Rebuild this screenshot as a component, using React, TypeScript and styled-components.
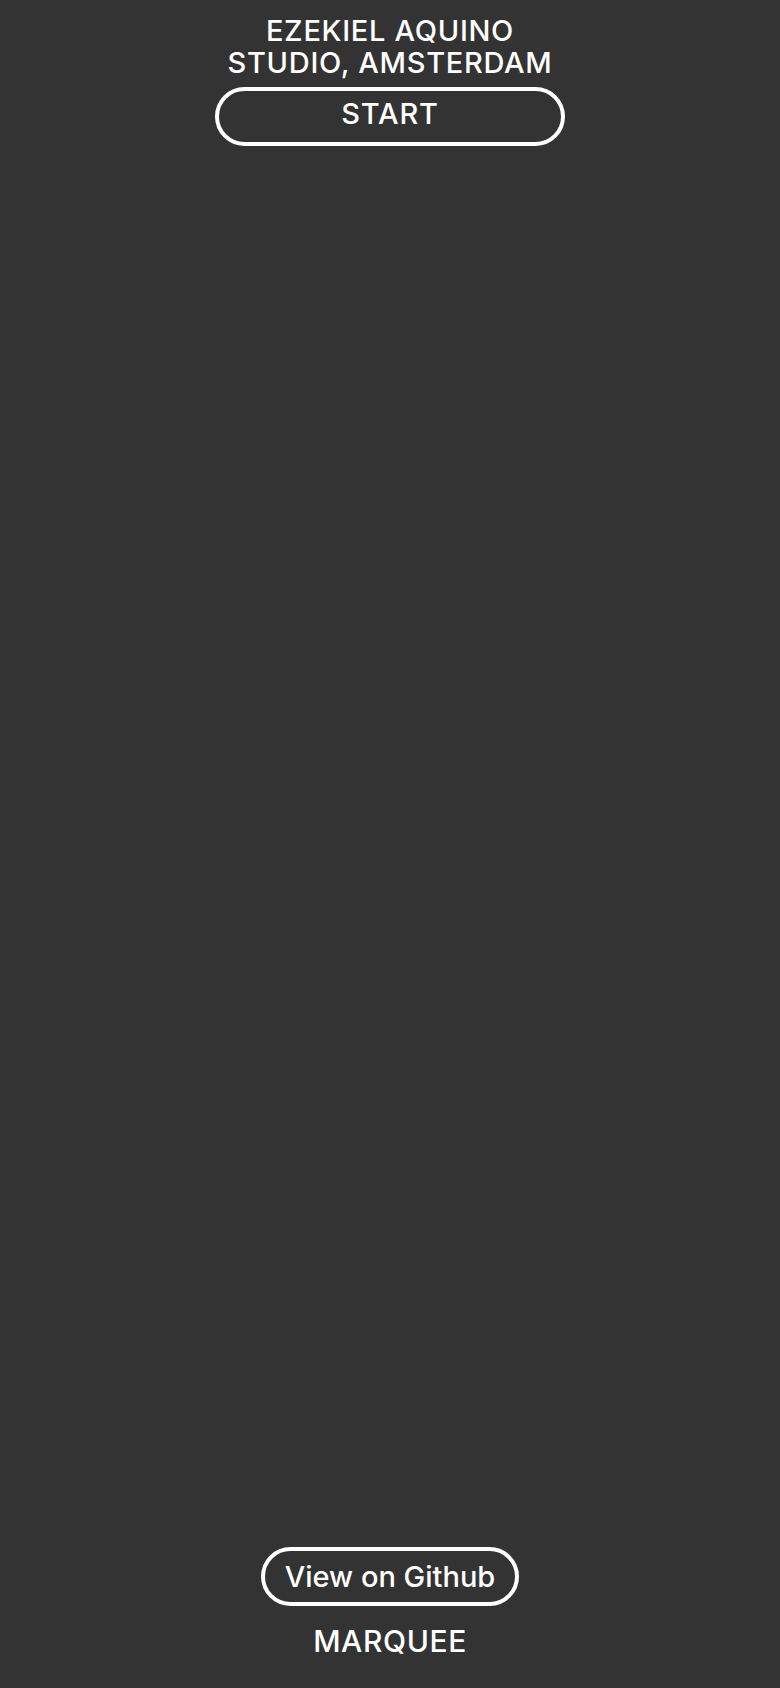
import React from 'react';
import styled, { createGlobalStyle } from 'styled-components';

const GlobalStyle = createGlobalStyle`
  html, body {
    margin: 0;
    padding: 0;
    background-color: #333333;
  }
  body {
    font-family: Inter, "Liberation Sans", Arial, sans-serif;
    font-weight: 500;
    color: #ffffff;
  }
`;

const Page = styled.div`
  min-height: 100vh;
  box-sizing: border-box;
  display: flex;
  flex-direction: column;
  justify-content: space-between;
  align-items: center;
  padding: 15px 0 29px;
`;

const Header = styled.header`
  display: flex;
  flex-direction: column;
  align-items: center;
  gap: 8px;
`;

const Title = styled.h1`
  margin: 0;
  font-size: 29px;
  font-weight: 500;
  line-height: 32px;
  letter-spacing: 0.7px;
  text-align: center;
  text-transform: uppercase;
`;

const Footer = styled.footer`
  display: flex;
  flex-direction: column;
  align-items: center;
  gap: 17px;
`;

const PillButton = styled.a<{ $wide?: boolean }>`
  display: flex;
  align-items: center;
  justify-content: center;
  box-sizing: border-box;
  height: 59px;
  width: ${({ $wide }) => ($wide ? '350px' : 'auto')};
  padding: ${({ $wide }) => ($wide ? '0 0 6px' : '0 20px 1px')};
  border: 4px solid #ffffff;
  border-radius: 999px;
  color: #ffffff;
  font-size: 29px;
  letter-spacing: ${({ $wide }) => ($wide ? '0.8px' : '0')};
  text-decoration: none;
  cursor: pointer;
`;

const Label = styled.div`
  font-size: 30px;
  letter-spacing: 0.6px;
  text-transform: uppercase;
`;

const App: React.FC = () => {
  return (
    <>
      <GlobalStyle />
      <Page>
        <Header>
          <Title>
            Ezekiel Aquino
            <br />
            Studio, Amsterdam
          </Title>
          <PillButton $wide>START</PillButton>
        </Header>
        <Footer>
          <PillButton>View on Github</PillButton>
          <Label>Marquee</Label>
        </Footer>
      </Page>
    </>
  );
};

export default App;
